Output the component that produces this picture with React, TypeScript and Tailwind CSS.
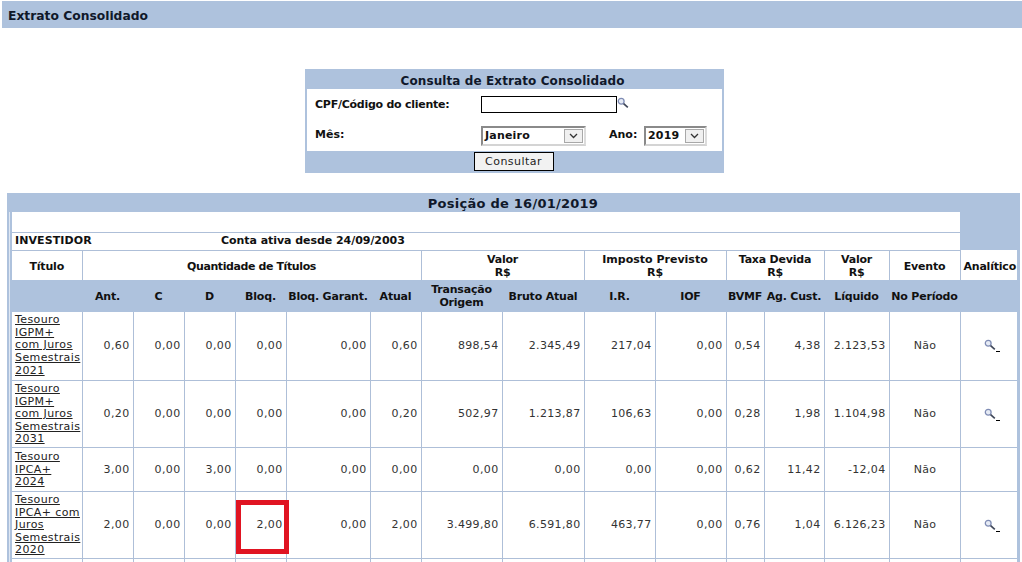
import React from 'react';

type Row = {
  titulo: string[];
  values: string[];
  evento: string;
  analitico: boolean;
  height: string;
  pad: string;
};

const rows: Row[] = [
  {
    titulo: ['Tesouro', 'IGPM+', 'com Juros', 'Semestrais', '2021'],
    values: ['0,60', '0,00', '0,00', '0,00', '0,00', '0,60', '898,54', '2.345,49', '217,04', '0,00', '0,54', '4,38', '2.123,53'],
    evento: 'Não',
    analitico: true,
    height: 'h-[68px]',
    pad: 'pt-0',
  },
  {
    titulo: ['Tesouro', 'IGPM+', 'com Juros', 'Semestrais', '2031'],
    values: ['0,20', '0,00', '0,00', '0,00', '0,00', '0,20', '502,97', '1.213,87', '106,63', '0,00', '0,28', '1,98', '1.104,98'],
    evento: 'Não',
    analitico: true,
    height: 'h-[67px]',
    pad: 'pt-[2px]',
  },
  {
    titulo: ['Tesouro', 'IPCA+', '2024'],
    values: ['3,00', '0,00', '3,00', '0,00', '0,00', '0,00', '0,00', '0,00', '0,00', '0,00', '0,62', '11,42', '-12,04'],
    evento: 'Não',
    analitico: false,
    height: 'h-[44px]',
    pad: 'pt-[2px]',
  },
  {
    titulo: ['Tesouro', 'IPCA+ com', 'Juros', 'Semestrais', '2020'],
    values: ['2,00', '0,00', '0,00', '2,00', '0,00', '2,00', '3.499,80', '6.591,80', '463,77', '0,00', '0,76', '1,04', '6.126,23'],
    evento: 'Não',
    analitico: true,
    height: 'h-[67px]',
    pad: 'pt-[2px]',
  },
];

const subHeaders = ['', 'Ant.', 'C', 'D', 'Bloq.', 'Bloq. Garant.', 'Atual', 'Transação Origem', 'Bruto Atual', 'I.R.', 'IOF', 'BVMF', 'Ag. Cust.', 'Líquido', 'No Período', ''];

const Lupa = () => (
  <svg width="12" height="12" viewBox="0 0 12 12" className="block">
    <circle cx="4.2" cy="4.2" r="2.9" fill="#e6ebf5" stroke="#7f8cb4" strokeWidth="1.3" />
    <path d="M6.6 6.6 L10.8 10.4" stroke="#3f4759" strokeWidth="1.7" />
  </svg>
);

const Seta = () => (
  <svg width="9" height="6" viewBox="0 0 9 6">
    <path d="M1 1 L4.5 4.5 L8 1" fill="none" stroke="#333" strokeWidth="1.3" />
  </svg>
);

const Select = ({ value, width }: { value: string; width: string }) => (
  <div className={`${width} h-[20px] flex items-center justify-between border-2 border-t-[#8a8a8a] border-l-[#8a8a8a] border-r-[#dcdcdc] border-b-[#d4d4d4] bg-white pl-[2px] pr-[1px] font-bold text-[11px] text-[#111] tracking-[0.2px]`}>
    <span className="pt-[1px]">{value}</span>
    <span className="w-[19px] h-[14px] bg-[#f0f0f0] border border-[#a8a8a8] flex items-center justify-center">
      <Seta />
    </span>
  </div>
);

const App = () => {
  return (
    <div className="w-[1022px] h-[562px] overflow-hidden bg-white font-['DejaVu_Sans',Verdana,sans-serif] text-[11px] text-[#222]">
      {/* Barra do título */}
      <div className="ml-[2px] mt-[1px] h-[27px] bg-[#aec2dd] pl-[6px] pt-[3px] flex items-center font-bold text-[12.3px] text-[#10182a]">
        Extrato Consolidado
      </div>

      {/* Consulta */}
      <div className="ml-[305px] mt-[41px] w-[419px] h-[104px] bg-[#aec2dd] flex flex-col px-[2px]">
        <div className="h-[20px] pt-[3px] pr-[4px] flex items-center justify-center font-bold text-[12px] text-[#10182a] tracking-[0.1px]">
          Consulta de Extrato Consolidado
        </div>
        <div className="h-[62px] bg-white pl-[8px] pt-[7px] flex flex-col font-bold text-[#111]">
          <div className="flex items-start h-[30px]">
            <span className="w-[166px] pt-[1px] tracking-[-0.25px]">CPF/Código do cliente:</span>
            <div className="w-[136px] h-[17px] border border-black bg-white" />
            <span className="mt-[1px]">
              <Lupa />
            </span>
          </div>
          <div className="flex items-start">
            <span className="w-[166px] pt-[1px]">Mês:</span>
            <Select value="Janeiro" width="w-[105px]" />
            <span className="ml-[23px] w-[35px] pt-[1px]">Ano:</span>
            <Select value="2019" width="w-[63px]" />
          </div>
        </div>
        <div className="flex justify-center pt-[1px] pr-[2px]">
          <button className="w-[80px] h-[19px] pt-[1px] border border-black bg-[#f2f2f2] text-[11px] text-[#222] tracking-[0.45px]">
            Consultar
          </button>
        </div>
      </div>

      {/* Posição */}
      <div className="ml-[7px] mt-[20px] w-[1013px] bg-[#aec2dd] pl-[2px] pr-[3px]">
        <div className="h-[19px] pt-[2px] flex items-center justify-center font-bold text-[13px] text-[#10182a] tracking-[0.25px]">
          Posição de 16/01/2019
        </div>
        <div className="border-l border-l-[#dfe7f2] pl-[2px]">
          <table className="table-fixed w-[1005px] border-collapse">
            <colgroup>
              <col className="w-[70px]" />
              <col className="w-[51px]" />
              <col className="w-[51px]" />
              <col className="w-[51px]" />
              <col className="w-[51px]" />
              <col className="w-[84px]" />
              <col className="w-[51px]" />
              <col className="w-[81px]" />
              <col className="w-[82px]" />
              <col className="w-[71px]" />
              <col className="w-[71px]" />
              <col className="w-[38px]" />
              <col className="w-[60px]" />
              <col className="w-[65px]" />
              <col className="w-[71px]" />
              <col className="w-[57px]" />
            </colgroup>
            <tbody>
              <tr className="h-[20px]">
                <td colSpan={15} className="bg-white border-b border-[#aebfd8]" />
                <td rowSpan={2} className="bg-[#aec2dd]" />
              </tr>
              <tr className="h-[18px]">
                <td colSpan={15} className="bg-white border-b border-[#aebfd8] font-bold text-[#111] pl-[3px]">
                  <div className="flex">
                    <span className="w-[206px] tracking-[0.1px]">INVESTIDOR</span>
                    <span className="tracking-[-0.05px]">Conta ativa desde 24/09/2003</span>
                  </div>
                </td>
              </tr>
              <tr className="h-[30px] bg-white font-bold text-[#111] text-center leading-[13px] tracking-[-0.2px]">
                <td className="border-r border-[#aebfd8] pt-[2px]">Título</td>
                <td colSpan={6} className="border-r border-[#aebfd8] pt-[2px] tracking-[-0.4px]">Quantidade de Títulos</td>
                <td colSpan={2} className="border-r border-[#aebfd8] pt-[2px]">Valor<br />R$</td>
                <td colSpan={2} className="border-r border-[#aebfd8] pt-[2px] tracking-normal">Imposto Previsto<br />R$</td>
                <td colSpan={2} className="border-r border-[#aebfd8] pt-[2px]">Taxa Devida<br />R$</td>
                <td className="border-r border-[#aebfd8] pt-[2px]">Valor<br />R$</td>
                <td className="border-r border-[#aebfd8] pt-[2px]">Evento</td>
                <td className="whitespace-nowrap pt-[2px] pl-[2px]">Analítico</td>
              </tr>
              <tr className="h-[32px] bg-[#aec2dd] font-bold text-[#111] text-center leading-[13px] tracking-[-0.2px]">
                {subHeaders.map((h, i) => (
                  <td key={i} className="whitespace-normal">{h}</td>
                ))}
              </tr>
              {rows.map((row, r) => (
                <tr key={r} className={`${row.height} bg-white`}>
                  <td className={`${row.pad} border-r border-b border-[#aebfd8] pl-[3px] leading-[12.6px] tracking-[0.4px] text-[#222] underline whitespace-nowrap`}>
                    {row.titulo.map((line, i) => (
                      <div key={i}>{line}</div>
                    ))}
                  </td>
                  {row.values.map((v, i) => (
                    <td key={i} className={`${row.pad} relative border-r border-b border-[#aebfd8] text-right pr-[3px] tracking-[0.35px] text-[#333]`}>
                      {v}
                      {r === 3 && i === 3 && (
                        <div className="absolute left-0 -right-[3px] top-[8px] bottom-[4px] border-[5px] border-[#e01422]" />
                      )}
                    </td>
                  ))}
                  <td className={`${row.pad} border-r border-b border-[#aebfd8] pl-[1px] text-center tracking-[0.3px] text-[#333]`}>{row.evento}</td>
                  <td className={`${row.pad} border-b border-[#aebfd8]`}>
                    {row.analitico && (
                      <div className="flex justify-center items-end pl-[7px] mt-[-2px]">
                        <Lupa />
                        <span className="w-[4px] h-[1px] bg-black mb-[-1px]" />
                      </div>
                    )}
                  </td>
                </tr>
              ))}
              <tr className="h-[60px] bg-white">
                {subHeaders.map((_, i) => (
                  <td key={i} className={i < 15 ? 'border-r border-[#aebfd8]' : ''} />
                ))}
              </tr>
            </tbody>
          </table>
        </div>
      </div>
    </div>
  );
};

export default App;
